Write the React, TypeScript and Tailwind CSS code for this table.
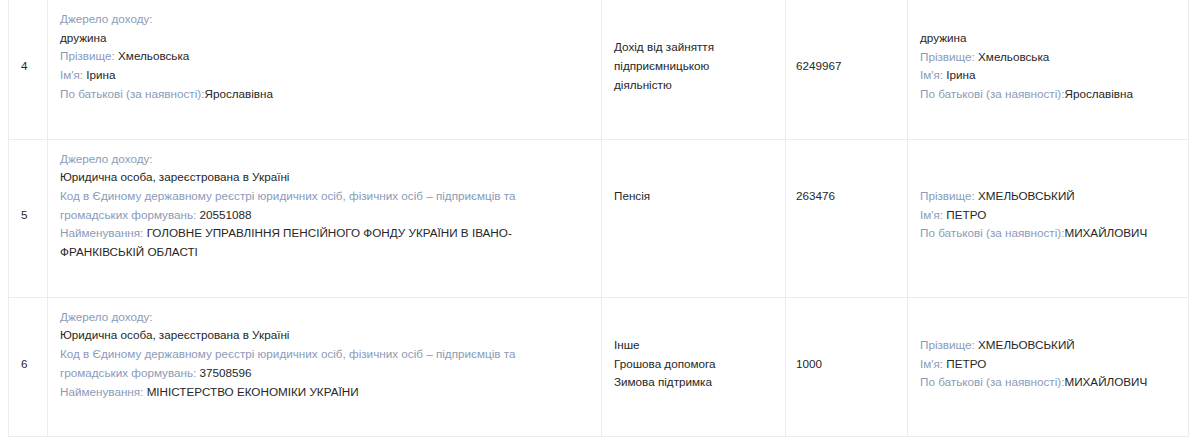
const label = 'text-[#8a9bb8]';
const value = 'text-[#262626]';

type Person = { pre?: string; last: string; first: string; middle: string };

function PersonBlock({ p }: { p: Person }) {
  return (
    <div>
      {p.pre && <div className={value}>{p.pre}</div>}
      <div>
        <span className={label}>Прізвище: </span>
        <span className={value}>{p.last}</span>
      </div>
      <div>
        <span className={label}>Ім'я: </span>
        <span className={value}>{p.first}</span>
      </div>
      <div>
        <span className={label}>По батькові (за наявності):</span>
        <span className={value}>{p.middle}</span>
      </div>
    </div>
  );
}

function LegalSource({ code, name }: { code: string; name: string }) {
  return (
    <div className="max-w-[462px]">
      <div className={label}>Джерело доходу:</div>
      <div className={value}>Юридична особа, зареєстрована в Україні</div>
      <div>
        <span className={label}>
          Код в Єдиному державному реєстрі юридичних осіб, фізичних осіб – підприємців та громадських формувань:{' '}
        </span>
        <span className={value}>{code}</span>
      </div>
      <div>
        <span className={label}>Найменування: </span>
        <span className={value}>{name}</span>
      </div>
    </div>
  );
}

const petro: Person = { last: 'ХМЕЛЬОВСЬКИЙ', first: 'ПЕТРО', middle: 'МИХАЙЛОВИЧ' };

const rows = [
  {
    n: '4',
    source: (
      <div>
        <div className={label}>Джерело доходу:</div>
        <PersonBlock p={{ pre: 'дружина', last: 'Хмельовська', first: 'Ірина', middle: 'Ярославівна' }} />
      </div>
    ),
    type: ['Дохід від зайняття', 'підприємницькою', 'діяльністю'],
    amount: ['6249967'],
    owner: { pre: 'дружина', last: 'Хмельовська', first: 'Ірина', middle: 'Ярославівна' },
  },
  {
    n: '5',
    source: <LegalSource code="20551088" name="ГОЛОВНЕ УПРАВЛІННЯ ПЕНСІЙНОГО ФОНДУ УКРАЇНИ В ІВАНО-ФРАНКІВСЬКІЙ ОБЛАСТІ" />,
    type: ['Пенсія', '\u00a0', '\u00a0'],
    amount: ['263476', '\u00a0', '\u00a0'],
    owner: petro,
  },
  {
    n: '6',
    source: <LegalSource code="37508596" name="МІНІСТЕРСТВО ЕКОНОМІКИ УКРАЇНИ" />,
    type: ['Інше', 'Грошова допомога', 'Зимова підтримка'],
    amount: ['1000'],
    owner: petro,
  },
];

export default function App() {
  return (
    <div className="min-h-screen bg-white px-2 font-['Liberation_Sans',Arial,sans-serif] text-[11.7px] leading-[18.7px]">
      <table className="mt-[-1px] w-[1181px] table-fixed border-collapse border border-[#ececec]">
        <colgroup>
          <col className="w-[39px]" />
          <col className="w-[554px]" />
          <col className="w-[184px]" />
          <col className="w-[122px]" />
          <col />
        </colgroup>
        <tbody>
          {rows.map((r) => (
            <tr key={r.n} className="border-b border-[#e6efee]">
              <td className="border-r border-[#ececec] px-3 pt-[10px] pb-[16px] align-middle text-[#262626]">{r.n}</td>
              <td className="border-r border-[#ececec] pl-3 pr-3 pt-[10px] pb-[35px] align-middle">{r.source}</td>
              <td className="border-r border-[#ececec] px-3 pt-[10px] pb-[16px] align-middle text-[#262626]">
                {r.type.map((t, i) => (
                  <div key={i}>{t}</div>
                ))}
              </td>
              <td className="border-r border-[#ececec] px-[10px] pt-[10px] pb-[16px] align-middle text-[#262626]">
                {r.amount.map((t, i) => (
                  <div key={i}>{t}</div>
                ))}
              </td>
              <td className="px-3 pt-[10px] pb-[16px] align-middle">
                <PersonBlock p={r.owner} />
              </td>
            </tr>
          ))}
        </tbody>
      </table>
    </div>
  );
}
